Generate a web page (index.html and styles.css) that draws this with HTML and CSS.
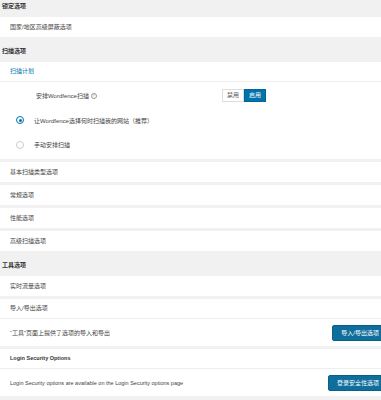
FILE: index.html
```html
<!DOCTYPE html>
<html lang="zh-CN">
<head>
  <meta charset="UTF-8">
  <meta name="viewport" content="width=device-width, initial-scale=1.0">
  <title>Wordfence 选项</title>
  <link rel="stylesheet" href="styles.css">
</head>
<body>
  <div class="page">
    <div class="section-title first">锁定选项</div>
    <div class="row">国家/地区高级屏蔽选项</div>

    <div class="section-title">扫描选项</div>
    <div class="card">
      <div class="card-head link">扫描计划</div>
      <div class="option">
        <span class="option-label">安排Wordfence扫描 <span class="help">?</span></span>
        <div class="toggle">
          <span class="toggle-btn">禁用</span>
          <span class="toggle-btn on">启用</span>
        </div>
      </div>
      <div class="radio-row">
        <span class="radio checked"></span>
        <span>让Wordfence选择何时扫描我的网站（推荐）</span>
      </div>
      <div class="radio-row last">
        <span class="radio"></span>
        <span>手动安排扫描</span>
      </div>
    </div>
    <div class="row">基本扫描类型选项</div>
    <div class="row">常规选项</div>
    <div class="row">性能选项</div>
    <div class="row">高级扫描选项</div>

    <div class="section-title">工具选项</div>
    <div class="row">实时流量选项</div>
    <div class="card">
      <div class="card-head">导入/导出选项</div>
      <div class="card-body">
        <span>“工具”页面上提供了选项的导入和导出</span>
        <span class="btn">导入/导出选项</span>
      </div>
    </div>
    <div class="card">
      <div class="card-head bold latin">Login Security Options</div>
      <div class="card-body">
        <span class="latin">Login Security options are available on the Login Security options page</span>
        <span class="btn">登录安全性选项</span>
      </div>
    </div>
  </div>
</body>
</html>
```

FILE: styles.css
```css
body {
  margin: 0;
  background-color: #f1f1f1;
  font-family: "Liberation Sans", "Noto Sans CJK SC", sans-serif;
  font-size: 6px;
  color: #444;
  overflow: hidden;
}

.page {
  width: 396px;
}

.section-title {
  height: 25px;
  box-sizing: border-box;
  padding: 10px 0 0 2px;
  line-height: 8px;
  font-weight: bold;
  color: #333;
}

.section-title.first {
  height: 17px;
  padding-top: 2px;
}

.row {
  background-color: #fff;
  height: 20px;
  line-height: 20px;
  padding-left: 10px;
}

.card {
  background-color: #fff;
}

/* gray gap between stacked white blocks */
.row + .row,
.row + .card,
.card + .row,
.card + .card {
  margin-top: 3px;
}

.card-head {
  height: 19px;
  line-height: 19px;
  padding-left: 10px;
  border-bottom: 1px solid #eee;
}

.card-head.link {
  color: #0073aa;
}

.bold {
  font-weight: bold;
  color: #333;
}

.latin {
  font-size: 5.5px;
}

.option {
  display: flex;
  align-items: center;
  height: 26px;
  padding-left: 36px;
}

.option-label {
  width: 186px;
}

.help {
  display: inline-block;
  width: 4px;
  height: 4px;
  line-height: 4px;
  border: 1px solid #999;
  border-radius: 50%;
  font-size: 4px;
  text-align: center;
  color: #999;
  vertical-align: middle;
}

.toggle {
  display: flex;
}

.toggle-btn {
  width: 20px;
  height: 11px;
  line-height: 11px;
  text-align: center;
  border: 1px solid #ddd;
  background-color: #fff;
  color: #555;
}

.toggle-btn.on {
  background-color: #0073aa;
  border-color: #006799;
  color: #fff;
}

.radio-row {
  display: flex;
  align-items: center;
  height: 24px;
  padding-left: 16px;
}

.radio-row.last {
  height: 25px;
  padding-bottom: 2px;
}

.radio {
  width: 8px;
  height: 8px;
  border: 1px solid #ccc;
  border-radius: 50%;
  margin-right: 10px;
  box-sizing: border-box;
  position: relative;
}

.radio.checked {
  border-color: #0073aa;
}

.radio.checked::after {
  content: "";
  position: absolute;
  left: 1.5px;
  top: 1.5px;
  width: 3px;
  height: 3px;
  border-radius: 50%;
  background-color: #0073aa;
}

.card-body {
  display: flex;
  justify-content: space-between;
  align-items: center;
  height: 27px;
  padding: 0 8px 0 10px;
}

.btn {
  background-color: #0f6e9c;
  border: 1px solid #0a5f88;
  border-radius: 2px;
  color: #fff;
  height: 14px;
  line-height: 14px;
  padding: 0 8px;
  font-size: 6px;
}
```
